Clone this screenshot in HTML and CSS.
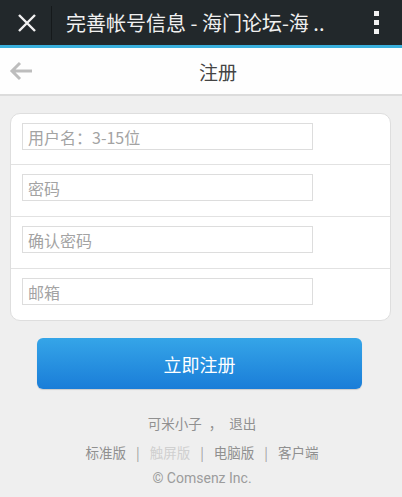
FILE: index.html
```html
<!DOCTYPE html>
<html>
<head>
<meta charset="utf-8">
<link rel="stylesheet" href="styles.css">
</head>
<body>
<div class="topbar">
  <div class="close">
    <svg width="20" height="20" viewBox="0 0 20 20"><path d="M2 2 L18 18 M18 2 L2 18" stroke="#f2f2f2" stroke-width="2.4" fill="none"/></svg>
  </div>
  <div class="divider"></div>
  <div class="wtitle">完善帐号信息 - 海门论坛-海 ..</div>
  <div class="menu"><span></span><span></span><span></span></div>
</div>
<div class="accent"></div>
<div class="header">
  <div class="back">
    <svg width="24" height="20" viewBox="0 0 24 20"><path d="M11 2 L3 10 L11 18 M3 10 L23 10" stroke="#bdbdbd" stroke-width="3" fill="none"/></svg>
  </div>
  <div class="title">注册</div>
</div>
<div class="card">
  <div class="row"><input class="field" placeholder="用户名：3-15位"></div>
  <div class="row"><input class="field" placeholder="密码"></div>
  <div class="row"><input class="field" placeholder="确认密码"></div>
  <div class="row"><input class="field" placeholder="邮箱"></div>
</div>
<div class="btnwrap"><div class="btn">立即注册</div></div>
<div class="footer">
  <div class="user">可米小子 <span class="comma">，</span> 退出</div>
  <div class="links">标准版<span class="sep">|</span><span class="dim">触屏版</span><span class="sep">|</span>电脑版<span class="sep">|</span>客户端</div>
  <div class="copy">© Comsenz Inc.</div>
</div>
</body>
</html>
```
FILE: styles.css
```css
* { box-sizing: border-box; }
body {
  margin: 0;
  background: #efefef;
  font-family: "Noto Sans CJK SC", "Noto Sans", sans-serif;
  width: 402px;
  height: 497px;
  overflow: hidden;
}
.topbar {
  height: 45px;
  background: #22282b;
  display: flex;
  align-items: center;
}
.close {
  width: 51px;
  display: flex;
  justify-content: center;
  padding-left: 2px;
}
.divider {
  width: 1px;
  height: 34px;
  background: #15191b;
}
.wtitle {
  flex: 1;
  padding-left: 14px;
  color: #f0f0f0;
  font-size: 20px;
  line-height: 24px;
  white-space: nowrap;
}
.menu {
  width: 50px;
  display: flex;
  flex-direction: column;
  align-items: center;
  gap: 4px;
  padding-right: 2px;
}
.menu span {
  width: 5px;
  height: 5px;
  background: #f2f2f2;
}
.accent {
  height: 3px;
  background: #3ab0dc;
}
.header {
  height: 48px;
  background: #fefefe;
  border-bottom: 2px solid #dcdcdc;
  position: relative;
  display: flex;
  align-items: center;
  justify-content: center;
}
.back {
  position: absolute;
  left: 9px;
  top: 13px;
}
.title {
  font-size: 19px;
  color: #444;
  padding-left: 34px;
}
.card {
  margin: 17px 11px 0 10px;
  background: #fff;
  border: 1px solid #dedede;
  border-radius: 10px;
}
.row {
  height: 52px;
  padding: 9px 0 0 11px;
  border-top: 1px solid #e2e2e2;
}
.row:first-child {
  border-top: none;
  height: 50px;
}
.field {
  width: 291px;
  height: 27px;
  border: 1px solid #dddddd;
  background: #fff;
  font-family: inherit;
  font-size: 16px;
  padding: 0 5px;
  outline: none;
}
.field::placeholder { color: #a3a3a3; }
.btnwrap {
  padding: 17px 0 0 37px;
}
.btn {
  width: 325px;
  height: 51px;
  border-radius: 6px;
  background: linear-gradient(#35a5e8, #1a7dd8);
  color: #fff;
  font-size: 18px;
  display: flex;
  align-items: center;
  justify-content: center;
  box-shadow: 0 1px 1px rgba(0,0,0,0.15);
}
.footer {
  text-align: center;
  color: #909090;
  font-size: 13.5px;
  padding-top: 24px;
  padding-left: 2px;
}
.user { line-height: 20px; }
.comma { margin: 0 4px; }
.links { line-height: 20px; margin-top: 9px; }
.sep { margin: 0 10px; color: #a0a0a0; }
.dim { color: #d0d0d0; }
.copy { margin-top: 6px; line-height: 20px; font-family: "Roboto", sans-serif; font-size: 14px; color: #9c9c9c; }
```
